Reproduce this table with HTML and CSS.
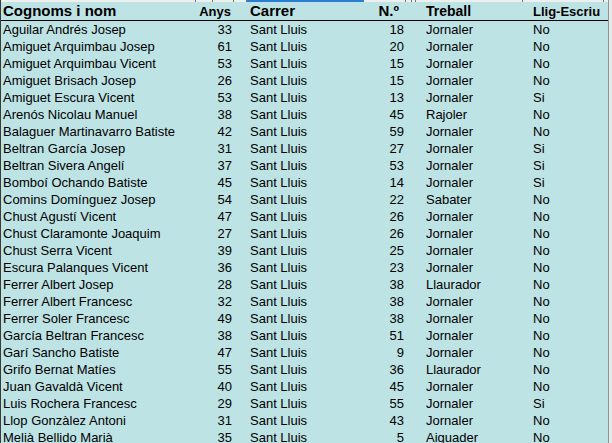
FILE: index.html
```html
<!DOCTYPE html>
<html>
<head>
<meta charset="utf-8">
<link rel="stylesheet" href="styles.css">
</head>
<body>
<div class="sheet">
  <div class="main">
    <div class="colstrip">
      <span class="seg s1"></span><span class="seg s2"></span><span class="seg s3"></span><span class="seg s4"></span><span class="seg sel"></span><span class="seg s6"></span><span class="seg s7"></span><span class="seg s8"></span><span class="seg s9"></span><span class="seg s10"></span>
    </div>
    <div class="grid head">
      <div class="c name h15">Cognoms i nom</div>
      <div class="c num h13 anys">Anys</div>
      <div class="c"></div>
      <div class="c txt h15">Carrer</div>
      <div class="c num h15 nro">N.º</div>
      <div class="c"></div>
      <div class="c txt h14">Treball</div>
      <div class="c txt h13">Llig-Escriu</div>
    </div>
    <div class="grid body" id="rows"></div>
  </div>
  <div class="edge"></div>
</div>
<script src="app.js"></script>
</body>
</html>
```

FILE: app.js
```js
const data = [
["Aguilar Andrés Josep",33,"Sant Lluis",18,"Jornaler","No"],
["Amiguet Arquimbau Josep",61,"Sant Lluis",20,"Jornaler","No"],
["Amiguet Arquimbau Vicent",53,"Sant Lluis",15,"Jornaler","No"],
["Amiguet Brisach Josep",26,"Sant Lluis",15,"Jornaler","No"],
["Amiguet Escura Vicent",53,"Sant Lluis",13,"Jornaler","Si"],
["Arenós Nicolau Manuel",38,"Sant Lluis",45,"Rajoler","No"],
["Balaguer Martinavarro Batiste",42,"Sant Lluis",59,"Jornaler","No"],
["Beltran García Josep",31,"Sant Lluis",27,"Jornaler","Si"],
["Beltran Sivera Angelí",37,"Sant Lluis",53,"Jornaler","Si"],
["Bomboí Ochando Batiste",45,"Sant Lluis",14,"Jornaler","Si"],
["Comins Domínguez Josep",54,"Sant Lluis",22,"Sabater","No"],
["Chust Agustí Vicent",47,"Sant Lluis",26,"Jornaler","No"],
["Chust Claramonte Joaquim",27,"Sant Lluis",26,"Jornaler","No"],
["Chust Serra Vicent",39,"Sant Lluis",25,"Jornaler","No"],
["Escura Palanques Vicent",36,"Sant Lluis",23,"Jornaler","No"],
["Ferrer Albert Josep",28,"Sant Lluis",38,"Llaurador","No"],
["Ferrer Albert Francesc",32,"Sant Lluis",38,"Jornaler","No"],
["Ferrer Soler Francesc",49,"Sant Lluis",38,"Jornaler","No"],
["García Beltran Francesc",38,"Sant Lluis",51,"Jornaler","No"],
["Garí Sancho Batiste",47,"Sant Lluis",9,"Jornaler","No"],
["Grifo Bernat Matíes",55,"Sant Lluis",36,"Llaurador","No"],
["Juan Gavaldà Vicent",40,"Sant Lluis",45,"Jornaler","No"],
["Luis Rochera Francesc",29,"Sant Lluis",55,"Jornaler","Si"],
["Llop Gonzàlez Antoni",31,"Sant Lluis",43,"Jornaler","No"],
["Melià Bellido Marià",35,"Sant Lluis",5,"Aiguader","No"]
];
const rows = document.getElementById("rows");
const cls = ["c name","c num","c","c txt","c num","c","c txt","c txt"];
data.forEach(r => {
  const vals = [r[0], r[1], "", r[2], r[3], "", r[4], r[5]];
  vals.forEach((v, i) => {
    const d = document.createElement("div");
    d.className = cls[i];
    d.textContent = v;
    rows.appendChild(d);
  });
});
```

FILE: styles.css
```css
html, body { margin: 0; padding: 0; }
body {
  width: 612px;
  height: 443px;
  overflow: hidden;
  font-family: "Liberation Sans", Arial, sans-serif;
  color: #000;
}
.sheet {
  display: flex;
  width: 612px;
  height: 443px;
  background: #bee3e5;
}
.main {
  width: 607px;
  border-left: 1px solid #3a3a3a;
  border-right: 1px solid #8a9596;
  display: flex;
  flex-direction: column;
}
.edge {
  flex: 1;
  background: #e4eaea;
}
.colstrip {
  height: 2px;
  display: flex;
  background: #eef0f0;
}
.seg { height: 2px; border-right: 1px solid #777; box-sizing: border-box; }
.s1 { width: 195px; }
.s2 { width: 17px; }
.s3 { width: 21px; }
.s4 { width: 13px; }
.sel { width: 117px; background: #2a7fd4; border-right: none; }
.s6 { width: 42px; }
.s7 { width: 6px; }
.s8 { width: 4px; }
.s9 { width: 107px; }
.s10 { width: 81px; }
.grid {
  display: grid;
  grid-template-columns: 191px 44px 11px 119px 42px 15px 107px 77px;
}
.head {
  height: 18px;
  align-items: baseline;
  border-bottom: 1px solid #000;
  font-weight: bold;
}
.head .c { line-height: 18px; }
.h15 { font-size: 15px; }
.h14 { font-size: 14px; }
.h13 { font-size: 13px; }
.head .anys { padding-right: 5px; }
.head .nro { padding-right: 9px; }
.body {
  grid-auto-rows: 17px;
  font-size: 13px;
  line-height: 17px;
}
.c { white-space: nowrap; overflow: hidden; }
.name { padding-left: 2px; }
.txt { padding-left: 3px; }
.num { text-align: right; padding-right: 4px; }
```
